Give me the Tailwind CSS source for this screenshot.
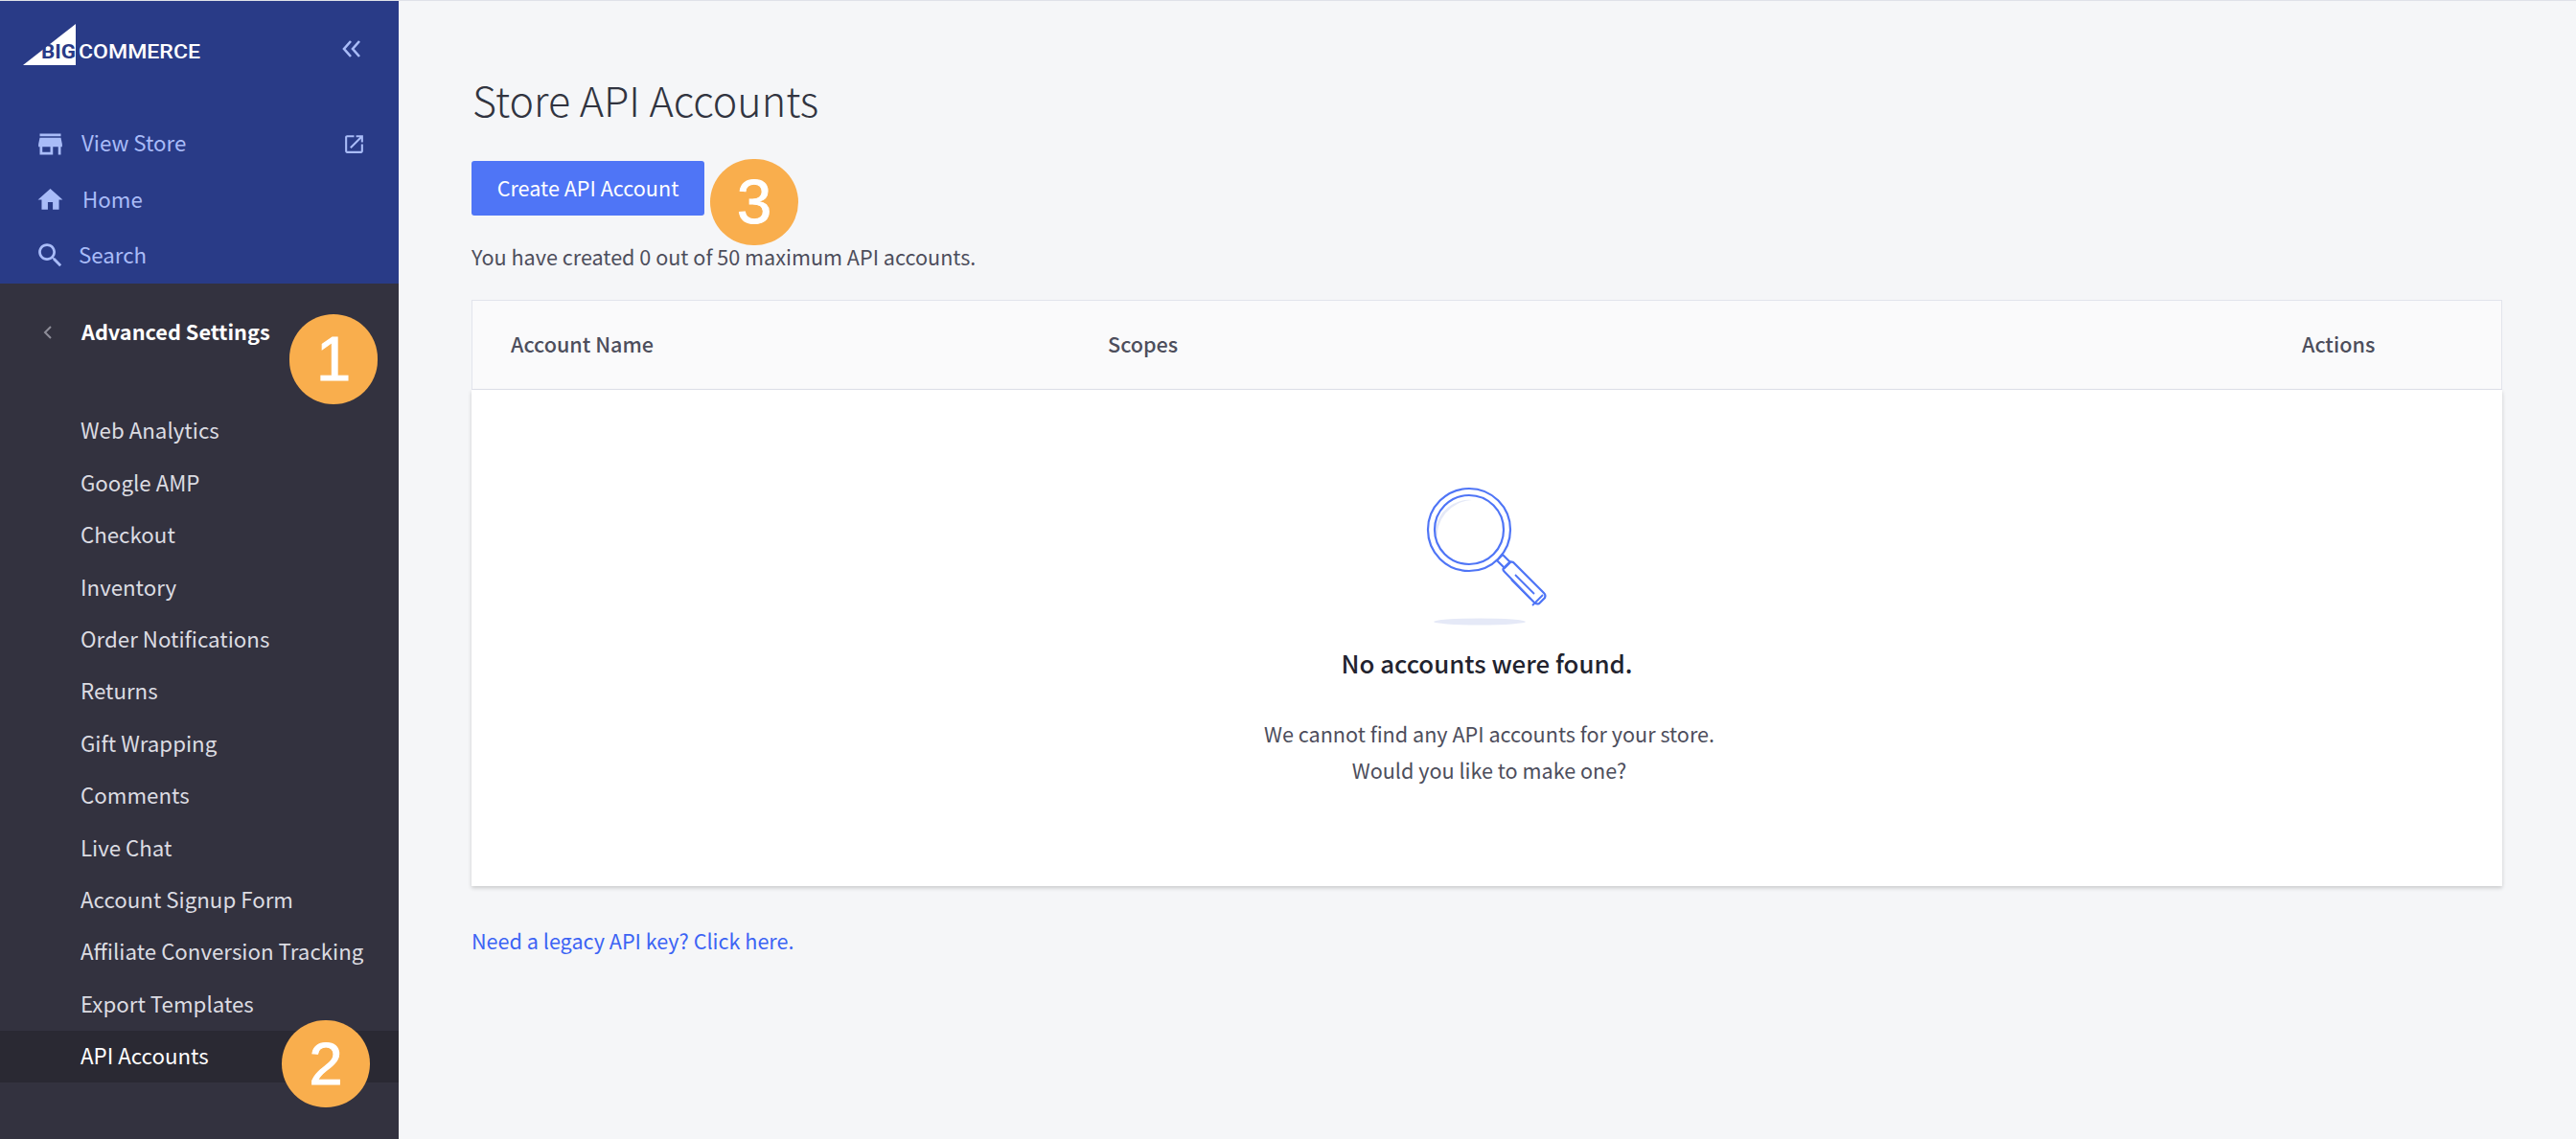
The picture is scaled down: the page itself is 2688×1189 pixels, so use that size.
<!DOCTYPE html>
<html lang="en">
<head>
    <meta charset="UTF-8">
    <title>Store API Accounts</title>
    <script src="https://cdn.jsdelivr.net/npm/@tailwindcss/browser@4"></script>
</head>
<body class="bg-[#f5f6f8] font-['Noto_Sans_CJK_SC',sans-serif]">
    <div class="relative flex w-[2688px] h-[1189px] overflow-hidden border-t border-[#dfe1e8]">
        <!-- Sidebar -->
        <aside class="w-[416px] shrink-0 flex flex-col bg-[#33323f] text-[22.3px]">
            <div class="h-[295px] bg-[#293b87] text-[#a9bcf8]">
                <div class="h-[120px] flex items-start justify-between pl-[24px] pr-[38px] pt-[24px]">
                    <svg width="190" height="44" viewBox="0 0 190 44">
                        <polygon points="55,0 55,43 0,43" fill="#fff"/>
                        <text x="19" y="36" font-family="Roboto, sans-serif" font-weight="700" font-size="21" fill="#293b87" textLength="36" lengthAdjust="spacingAndGlyphs">BIG</text>
                        <text x="58" y="36" font-family="Roboto, sans-serif" font-weight="500" font-size="21" fill="#fff" textLength="127" lengthAdjust="spacingAndGlyphs">COMMERCE</text>
                    </svg>
                    <svg class="mt-[15px]" width="22" height="22" viewBox="0 0 22 22" fill="none" stroke="#a9bcf8" stroke-width="2.6">
                        <path d="M10 3 3 11l7 8M19 3l-7 8 7 8"/>
                    </svg>
                </div>
                <div class="h-[58px] flex items-center pl-[36px] pr-[34px]">
                    <svg class="w-[33px] h-[33px] fill-current" viewBox="0 0 24 24"><path d="M20 4H4v2h16V4zm1 10v-2l-1-5H4l-1 5v2h1v6h10v-6h4v6h2v-6h1zm-9 4H6v-4h6v4z"/></svg>
                    <span class="ml-[16px] flex-1 pb-[2px]">View Store</span>
                    <svg class="w-[25px] h-[25px] fill-current" viewBox="0 0 24 24"><path d="M19 19H5V5h7V3H5c-1.11 0-2 .9-2 2v14c0 1.1.89 2 2 2h14c1.1 0 2-.9 2-2v-7h-2v7zM14 3v2h3.59l-9.83 9.83 1.41 1.41L19 6.41V10h2V3h-7z"/></svg>
                </div>
                <div class="h-[58px] flex items-center pl-[37px]">
                    <svg class="w-[31px] h-[31px] fill-current" viewBox="0 0 24 24"><path d="M10 20v-6h4v6h5v-8h3L12 3 2 12h3v8z"/></svg>
                    <span class="ml-[18px] pb-[1px]">Home</span>
                </div>
                <div class="h-[58px] flex items-center pl-[36px]">
                    <svg class="w-[33px] h-[33px] fill-current" viewBox="0 0 24 24"><path d="M15.5 14h-.79l-.28-.27C15.41 12.59 16 11.11 16 9.5 16 5.91 13.09 3 9.5 3S3 5.91 3 9.5 5.91 16 9.5 16c1.61 0 3.09-.59 4.23-1.57l.27.28v.79l5 4.99L20.49 19l-4.99-5zm-6 0C7.01 14 5 11.99 5 9.5S7.01 5 9.5 5 14 7.01 14 9.5 11.99 14 9.5 14z"/></svg>
                    <span class="ml-[13px]">Search</span>
                </div>
            </div>
            <div class="pt-[24px]">
                <div class="h-[54px] flex items-center pl-[45px] text-white font-bold">
                    <svg width="9" height="18" viewBox="0 0 9 18" fill="none" stroke="#8e8d98" stroke-width="2"><path d="M8 3 2 9l6 6"/></svg>
                    <span class="ml-[31px] pb-[1px] text-[21.7px]">Advanced Settings</span>
                </div>
                <ul class="mt-[49px] text-[#dcdce2]">
                    <li class="h-[54.4px] flex items-center pl-[84px] pb-[2px]">Web Analytics</li>
                    <li class="h-[54.4px] flex items-center pl-[84px] pb-[2px]">Google AMP</li>
                    <li class="h-[54.4px] flex items-center pl-[84px] pb-[2px]">Checkout</li>
                    <li class="h-[54.4px] flex items-center pl-[84px] pb-[2px]">Inventory</li>
                    <li class="h-[54.4px] flex items-center pl-[84px] pb-[2px]">Order Notifications</li>
                    <li class="h-[54.4px] flex items-center pl-[84px] pb-[2px]">Returns</li>
                    <li class="h-[54.4px] flex items-center pl-[84px] pb-[2px]">Gift Wrapping</li>
                    <li class="h-[54.4px] flex items-center pl-[84px] pb-[2px]">Comments</li>
                    <li class="h-[54.4px] flex items-center pl-[84px] pb-[2px]">Live Chat</li>
                    <li class="h-[54.4px] flex items-center pl-[84px] pb-[2px]">Account Signup Form</li>
                    <li class="h-[54.4px] flex items-center pl-[84px] pb-[2px]">Affiliate Conversion Tracking</li>
                    <li class="h-[54.4px] flex items-center pl-[84px] pb-[2px]">Export Templates</li>
                    <li class="h-[54.4px] flex items-center pl-[84px] pb-[2px] bg-[#2a2933] text-white">API Accounts</li>
                </ul>
            </div>
        </aside>

        <!-- Main -->
        <main class="flex-1 pl-[76px] pr-[77px]">
            <h1 class="mt-[70px] h-[64px] leading-[64px] text-[43px] font-light text-[#313440] pl-[1px]">Store API Accounts</h1>
            <button class="mt-[33px] block w-[243px] h-[57px] pb-[1px] rounded-[3px] bg-[#4f75f6] text-white text-[21.6px]">Create API Account</button>
            <p class="mt-[25px] h-[36px] leading-[36px] text-[21.6px] text-[#4d4e5c]">You have created 0 out of 50 maximum API accounts.</p>
            <div class="mt-[27px] h-[94px] flex items-center bg-[#fafafb] border border-[#e2e4ec] text-[21.6px] font-medium text-[#4d4e5c]">
                <span class="w-[663px] pl-[40px] pb-[2px]">Account Name</span>
                <span class="flex-1 pb-[2px]">Scopes</span>
                <span class="w-[208px] pb-[2px]">Actions</span>
            </div>
            <div class="h-[518px] flex flex-col items-center bg-white shadow-[0_2px_4px_rgba(0,0,0,0.18)]">
                <svg class="mt-[98px] mr-[14px]" width="144" height="150" viewBox="0 0 144 150" fill="none" stroke="#4f75f6" stroke-width="2.2">
                    <ellipse cx="71" cy="144" rx="48" ry="3.5" fill="#e5e9f7" stroke="none"/>
                    <path d="M25 48a35 35 0 0 1 38-31A38 38 0 0 0 27 60a35 35 0 0 1-2-12z" fill="#e5e9f7" stroke="none"/>
                    <circle cx="60" cy="48" r="43"/>
                    <circle cx="60" cy="48" r="36"/>
                    <path d="M89 80l6-6 8 8-6 6z"/>
                    <path d="M97 92c-2-2-2-3-1-4l6-6c1-1 2-1 4 0l32 32c2 2 2 3 1 5l-6 6c-2 1-3 1-5-1z"/>
                    <path d="M108 95l20 20M104 100l20 20M126 127l11-11" stroke-width="1.8"/>
                </svg>
                <h2 class="mt-[18px] text-[25.8px] leading-[38px] font-medium text-[#22232e]">No accounts were found.</h2>
                <p class="mt-[36px] ml-[5px] text-[21.6px] leading-[38px] text-[#4d4e5c] text-center">We cannot find any API accounts for your store.<br>Would you like to make one?</p>
            </div>
            <a class="mt-[39px] block h-[36px] leading-[36px] text-[21.6px] text-[#3c64f4]">Need a legacy API key? Click here.</a>
        </main>

        <!-- Numbered callouts -->
        <div class="absolute left-[302px] top-[327px] w-[92px] h-[94px] rounded-full bg-[#f9ae4d] text-white flex items-center justify-center text-[65px] [-webkit-text-stroke:1px_white] font-['Liberation_Sans',sans-serif]">1</div>
        <div class="absolute left-[294px] top-[1064px] w-[92px] h-[91px] rounded-full bg-[#f9ae4d] text-white flex items-center justify-center text-[63px] [-webkit-text-stroke:1px_white] font-['Liberation_Sans',sans-serif]">2</div>
        <div class="absolute left-[741px] top-[165px] w-[92px] h-[90px] rounded-full bg-[#f9ae4d] text-white flex items-center justify-center text-[65px] [-webkit-text-stroke:1px_white] font-['Liberation_Sans',sans-serif]">3</div>
    </div>
</body>
</html>
